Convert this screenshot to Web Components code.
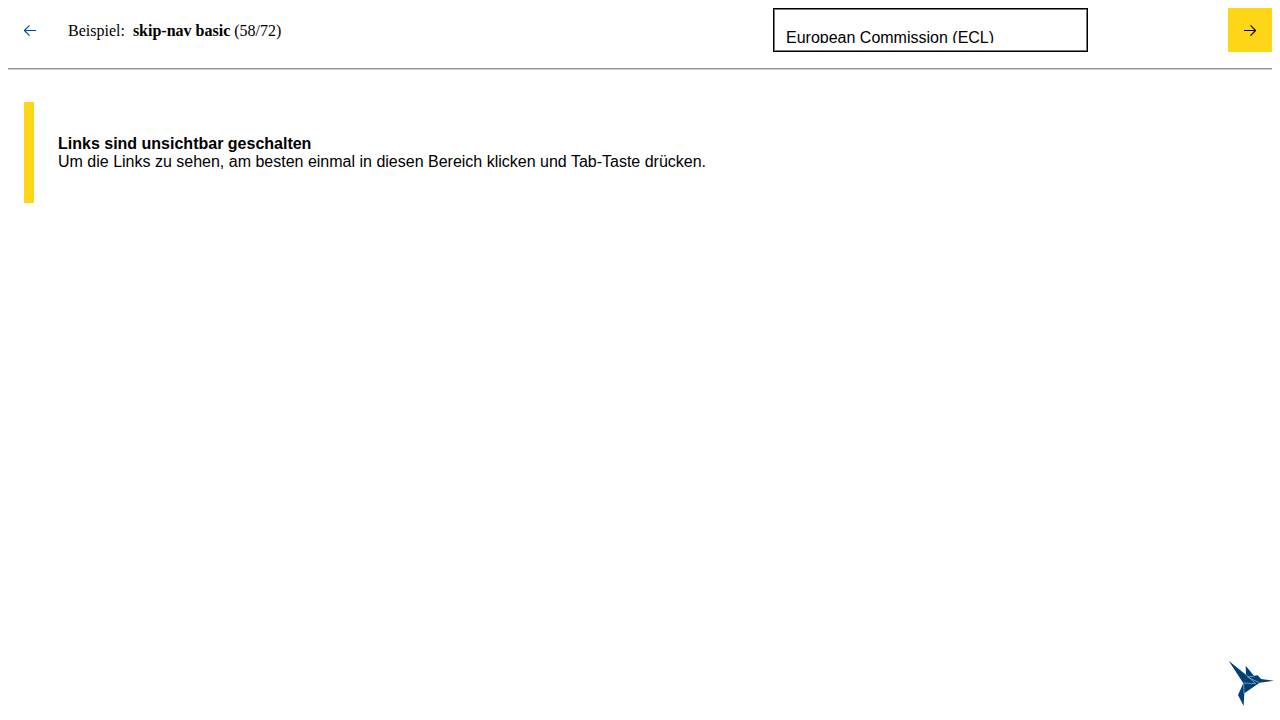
<!DOCTYPE html>
<html lang="de">
<head>
<meta charset="utf-8">
<meta name="viewport" content="width=device-width, initial-scale=1">
<title>skip-nav basic</title>
<style>
  body { margin: 8px; background: #fff; color: #000; font: 16px/18px "Liberation Serif", "Times New Roman", serif; }
</style>
</head>
<body>
<sample-page></sample-page>

<template id="page-template">
  <style>
    :host { display: block; }
    header { display: flex; align-items: center; gap: 16px; }
    .title { flex: 1; display: flex; gap: 8px; padding-top: 2px; }
    theme-select { margin-right: 124px; }
    hr { margin: 16px 0 0; border: 0; border-top: 1px solid #999; border-bottom: 1px solid #ccc; }
    main { padding: 32px 16px; }
    humming-bird { position: fixed; right: 4px; bottom: 12px; }
  </style>
  <header>
    <nav-button label="Zurück" direction="left"></nav-button>
    <div class="title"><span>Beispiel:</span><span><b>skip-nav basic</b> (58/72)</span></div>
    <theme-select></theme-select>
    <nav-button label="Weiter" direction="right" primary></nav-button>
  </header>
  <hr>
  <main>
    <hint-box>
      <strong slot="heading">Links sind unsichtbar geschalten</strong>
      Um die Links zu sehen, am besten einmal in diesen Bereich klicken und Tab-Taste drücken.
    </hint-box>
  </main>
  <humming-bird></humming-bird>
</template>

<template id="button-template">
  <style>
    :host { display: block; --ink: #0048a8; --fill: transparent; }
    :host([primary]) { --ink: #000; --fill: #ffd617; }
    button { display: grid; place-items: center; width: 44px; height: 44px; padding: 0; border: 0; background: var(--fill); color: var(--ink); cursor: pointer; }
    svg { display: block; width: 12px; height: 12px; fill: none; stroke: currentColor; stroke-width: 1.1; }
    :host([direction="left"]) svg { transform: scaleX(-1); }
  </style>
  <button type="button"><svg viewBox="0 0 12 12" aria-hidden="true"><path d="M0 6.5H11.6M6.5 1.3L11.6 6.5L6.5 11.7"/></svg></button>
</template>

<template id="select-template">
  <style>
    :host { display: block; }
    select { display: block; box-sizing: border-box; width: 315px; height: 44px; margin: 0; padding: 20px 12px 8px 12px; appearance: none; border: 1px solid #000; border-radius: 0; box-shadow: inset 0 0 0 1px #777; background: #fff; color: #000; font: 16px/18px "Liberation Sans", Arial, sans-serif; }
  </style>
  <select aria-label="Theme"><option>European Commission (ECL)</option></select>
</template>

<template id="hint-template">
  <style>
    :host { display: block; padding: 33px 24px 32px; border-left: 10px solid #ffd617; font: 16px/18px "Liberation Sans", Arial, sans-serif; }
    slot[name="heading"] { display: block; }
  </style>
  <slot name="heading"></slot>
  <slot></slot>
</template>

<template id="bird-template">
  <style>
    :host { display: block; width: 48px; height: 48px; }
    svg { display: block; width: 100%; height: 100%; fill: #004077; }
    .folds { fill: none; stroke: #b5cbdc; stroke-width: 1.8; }
  </style>
  <svg viewBox="24 24 144 144" role="img" aria-label="Kolibri">
    <path d="M26 26L78 68L77 41L102 71L113 70L123 81L162 86L119 92L73 124L71 162L54 129L70 94Z"/>
    <path class="folds" d="M78 68L107 95L70 93M82 75L103 72M86 77L118 92M71 94L72 124"/>
  </svg>
</template>

<script>
  class TemplateElement extends HTMLElement {
    constructor() {
      super();
      this.attachShadow({ mode: "open" })
        .append(document.getElementById(this.constructor.template).content.cloneNode(true));
    }
  }
  class NavButton extends TemplateElement {
    static template = "button-template";
    connectedCallback() {
      this.shadowRoot.querySelector("button").setAttribute("aria-label", this.getAttribute("label"));
    }
  }
  class ThemeSelect extends TemplateElement { static template = "select-template"; }
  class HintBox extends TemplateElement { static template = "hint-template"; }
  class HummingBird extends TemplateElement { static template = "bird-template"; }
  class SamplePage extends TemplateElement { static template = "page-template"; }

  customElements.define("nav-button", NavButton);
  customElements.define("theme-select", ThemeSelect);
  customElements.define("hint-box", HintBox);
  customElements.define("humming-bird", HummingBird);
  customElements.define("sample-page", SamplePage);
</script>
</body>
</html>
